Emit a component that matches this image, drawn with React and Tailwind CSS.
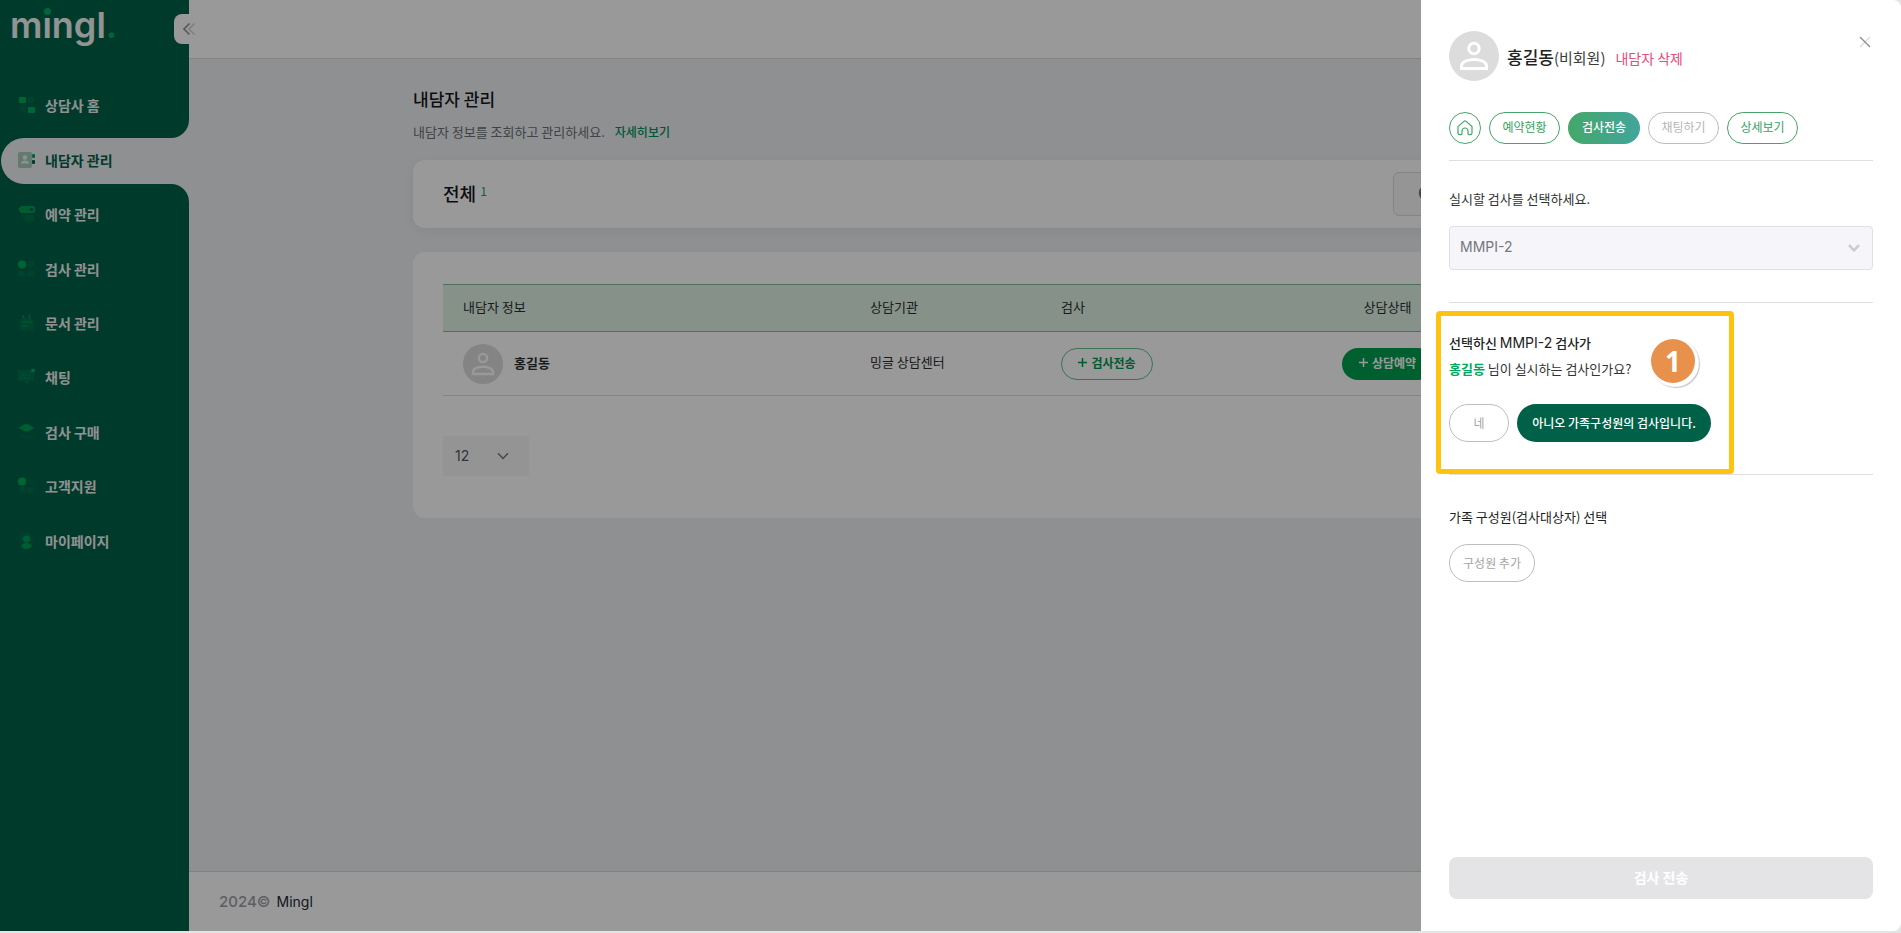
import React from "react";

const PersonIcon = ({ className }) => (
  <svg viewBox="0 0 50 50" className={className} aria-hidden="true">
    <circle cx="25" cy="25" r="25" fill="#dcdcdc" />
    <circle cx="25" cy="17.5" r="5.2" fill="none" stroke="#fff" strokeWidth="3" />
    <path
      d="M12.5 37.5v-2.6c0-4.6 8-6.4 12.5-6.4s12.5 1.8 12.5 6.4v2.6z"
      fill="none"
      stroke="#fff"
      strokeWidth="3"
    />
  </svg>
);

const ChevronDown = ({ className }) => (
  <svg viewBox="0 0 12 8" className={className} fill="none" stroke="currentColor" aria-hidden="true">
    <path d="M1 1.2 6 6.4l5-5.2" />
  </svg>
);

const icons = {
  home: (
    <>
      <rect x="1" y="1" width="7" height="6" rx="1" fill="#00a855" />
      <rect x="10" y="1" width="6" height="6" rx="1" fill="#006f4c" />
      <rect x="2" y="10" width="6" height="6" rx="1" fill="#006c4b" />
      <rect x="10" y="11" width="7" height="6" rx="1" fill="#00a855" />
    </>
  ),
  contacts: (
    <>
      <rect x="0" y="1" width="14" height="16" rx="2" fill="#a5cdb9" />
      <circle cx="7" cy="6.5" r="2.2" fill="#eff1f4" />
      <path d="M3 12.5c0-4 8-4 8 0z" fill="#eff1f4" />
      <rect x="14" y="3" width="3" height="4" rx="1" fill="#00a855" />
      <rect x="14" y="9" width="3" height="4" rx="1" fill="#006149" />
    </>
  ),
  booking: (
    <>
      <path d="M3.5 1H14a3.500 3.500 0 0 1 0 7H3.500L0 4.500z" fill="#009c53" />
      <circle cx="13.500" cy="4.500" r="1.800" fill="#006149" />
      <path d="M3 10h10a3.500 3.500 0 0 1 0 7H8z" fill="#00704c" />
    </>
  ),
  tests: (
    <>
      <circle cx="4" cy="4.500" r="4" fill="#00a855" />
      <rect x="10" y="1" width="6" height="6" rx="1.500" fill="#006f4c" />
      <rect x="0" y="11" width="7" height="5" rx="2" fill="#006f4c" />
      <rect x="9" y="11" width="8" height="5" rx="2" fill="#006f4c" />
    </>
  ),
  docs: (
    <>
      <path d="M4 4h10l2 5v5.500a2 2 0 0 1-2 2H3a2 2 0 0 1-2-2V9z" fill="#00704b" />
      <path d="M5.500 1v3M11.500 1v3M4 8h10M4 12h6" stroke="#009a54" strokeWidth="1.200" />
    </>
  ),
  chat: (
    <>
      <path d="M0 2h16v11h-4l-3 4-3-4H0z" fill="#00704f" />
      <circle cx="15" cy="2.500" r="2" fill="#00a855" />
      <path d="M4 7h9M3 10h8" stroke="#008a56" strokeDasharray="2 1" />
    </>
  ),
  shop: (
    <>
      <path d="M0 5c4-1 5-4 8.500-4S13 4 17 5c-4 1-5 3.500-8.500 3.500S4 6 0 5z" fill="#009c53" />
      <path d="M1 10c5 3 10 3 15 0v3c-4 4-11 4-15 0z" fill="#00694a" />
    </>
  ),
  support: (
    <>
      <circle cx="4" cy="4.500" r="4" fill="#00a855" />
      <rect x="10" y="2" width="6" height="5" rx="2" fill="#00694a" />
      <rect x="2" y="10" width="5" height="6" rx="2" fill="#006f4c" />
      <rect x="9" y="10" width="6" height="6" rx="2" fill="#006f4c" />
    </>
  ),
  me: (
    <>
      <circle cx="8.500" cy="8" r="7.500" fill="#00694a" />
      <circle cx="8.500" cy="7" r="3.500" fill="#009c53" />
      <path d="M3 14c2-4 9-4 11 0-2 4-9 4-11 0z" fill="#009c53" />
    </>
  ),
};

const menu = [
  { label: "상담사 홈", icon: "home" },
  { label: "내담자 관리", icon: "contacts", active: true },
  { label: "예약 관리", icon: "booking" },
  { label: "검사 관리", icon: "tests" },
  { label: "문서 관리", icon: "docs" },
  { label: "채팅", icon: "chat" },
  { label: "검사 구매", icon: "shop" },
  { label: "고객지원", icon: "support" },
  { label: "마이페이지", icon: "me" },
];

function InverseCorner({ top }) {
  return (
    <span
      className={
        top
          ? "absolute bottom-full right-0 size-[18px] bg-[#eff1f4]"
          : "absolute top-full right-0 size-[18px] bg-[#eff1f4]"
      }
    >
      <span
        className={
          top
            ? "block size-full rounded-br-[18px] bg-[#006149]"
            : "block size-full rounded-tr-[18px] bg-[#006149]"
        }
      />
    </span>
  );
}

function Sidebar() {
  return (
    <aside className="relative w-[189px] shrink-0 bg-[#006149]">
      <a
        href="#home"
        className="flex h-[79px] items-start pl-2.5 font-['Inter',sans-serif] text-4xl leading-[50px] font-semibold text-[#f4f6f5]"
      >
        <span>m</span>
        <span className="relative">
          i
          <span className="absolute top-2 left-0.5 size-[7px] rounded-full bg-[#00a862] ring-1 ring-[#006149]" />
        </span>
        <span>ngl</span>
        <span className="text-[#00a862]">.</span>
      </a>
      <button
        aria-label="메뉴 접기"
        className="absolute top-3.5 -right-4 flex h-[30px] w-[31px] items-center rounded-lg bg-white pl-2"
      >
        <svg viewBox="0 0 14 14" className="size-3.5" fill="none" strokeWidth="1.6" aria-hidden="true">
          <path d="M7.500 1.500 2 7l5.500 5.500" stroke="#909090" />
          <path d="M12.500 1.500 7 7l5.500 5.500" stroke="#d4d4d4" />
        </svg>
      </button>
      <nav>
        <ul className="grid h-[490px] auto-rows-fr">
          {menu.map((m) => (
            <li key={m.label} className="flex items-center">
              <a
                href={"#" + m.icon}
                className={
                  m.active
                    ? "relative ml-px flex h-[46px] flex-1 items-center gap-2.5 rounded-l-full bg-[#eff1f4] pb-0.5 pl-[17px] text-sm font-bold text-[#006149]"
                    : "ml-px flex h-[46px] flex-1 items-center gap-2.5 pb-0.5 pl-[17px] text-sm font-bold text-[#f0f2f1]"
                }
              >
                {m.active && <InverseCorner top />}
                {m.active && <InverseCorner />}
                <svg viewBox="0 0 17 18" className="h-[18px] w-[17px]" aria-hidden="true">
                  {icons[m.icon]}
                </svg>
                {m.label}
              </a>
            </li>
          ))}
        </ul>
      </nav>
    </aside>
  );
}

const PlusIcon = () => (
  <svg viewBox="0 0 9 9" className="size-[9px]" stroke="currentColor" strokeWidth="1.500" aria-hidden="true">
    <path d="M4.500 0v9M0 4.500h9" />
  </svg>
);

function ClientTable() {
  return (
    <table className="w-full table-fixed border-collapse text-left text-[13px] text-[#2b2f33]">
      <colgroup>
        <col className="w-[407px]" />
        <col className="w-[191px]" />
        <col className="w-[230px]" />
        <col className="w-[233px]" />
        <col />
      </colgroup>
      <thead>
        <tr className="h-[47px] border-y border-[#7fbf9f] bg-[#dff3e4]">
          <th className="pb-0.5 pl-5 font-normal">내담자 정보</th>
          <th className="pb-0.5 pl-5 font-normal">상담기관</th>
          <th className="pb-0.5 pl-5 font-normal">검사</th>
          <th className="pb-0.5 text-center font-normal">상담상태</th>
          <td />
        </tr>
      </thead>
      <tbody>
        <tr className="h-16 border-b border-[#dcdfe0]">
          <td className="pl-5">
            <div className="flex items-center gap-[11px]">
              <PersonIcon className="size-10" />
              <strong className="pb-0.5 font-bold">홍길동</strong>
            </div>
          </td>
          <td className="pb-1 pl-5">밍글 상담센터</td>
          <td className="pl-5">
            <button className="flex h-8 w-[92px] items-center justify-center gap-1 rounded-full border border-[#5fbf92] pb-0.5 text-xs font-bold text-[#009750]">
              <PlusIcon />
              검사전송
            </button>
          </td>
          <td>
            <button className="mx-auto flex h-8 w-[92px] items-center justify-center gap-1 rounded-full bg-[#009f4f] pb-0.5 text-xs font-bold text-white">
              <PlusIcon />
              상담예약
            </button>
          </td>
          <td />
        </tr>
      </tbody>
    </table>
  );
}

function Page() {
  return (
    <div className="flex min-w-0 flex-1 flex-col bg-[#eff1f4]">
      <header className="h-[59px] shrink-0 border-b border-[#d9dbdd] bg-white" />
      <main className="mx-auto w-full max-w-[1264px] flex-1 pt-7">
        <h1 className="text-[17px] leading-6 font-medium text-[#15171c]">내담자 관리</h1>
        <p className="mt-[11px] flex items-center gap-2.5 text-[13px] leading-5 text-[#6b6f75]">
          내담자 정보를 조회하고 관리하세요.
          <a href="#more" className="text-xs leading-5 font-medium text-[#008f5a]">
            자세히보기
          </a>
        </p>
        <section className="mt-[18px] flex h-[68px] items-center justify-between rounded-xl bg-white px-[30px] shadow-[0_4px_16px_rgba(0,0,0,0.06)]">
          <h2 className="flex pb-0.5 text-lg font-medium text-[#15171c]">
            전체
            <sup className="top-1 ml-1 text-xs leading-4 font-normal text-[#00a862]">1</sup>
          </h2>
          <label className="flex h-11 w-[254px] items-center gap-2 rounded-md border border-[#dcdde0] bg-[#f8f8f9] pl-6 text-[13px]">
            <svg viewBox="0 0 18 18" className="size-[18px] shrink-0" fill="none" stroke="#777" strokeWidth="2.500" aria-hidden="true">
              <circle cx="8" cy="8" r="6" />
              <path d="m13 13 4 4" />
            </svg>
            <input aria-label="검색" className="min-w-0 flex-1 bg-transparent outline-none" />
          </label>
        </section>
        <section className="mt-6 rounded-xl bg-white px-[30px] pt-8 pb-[42px]">
          <ClientTable />
          <div className="relative mt-10 w-[86px]">
            <select
              aria-label="페이지당 개수"
              className="h-10 w-full appearance-none bg-[#f7f7f8] pl-3 font-['Inter',sans-serif] text-sm text-[#55585e]"
            >
              <option>12</option>
            </select>
            <ChevronDown className="pointer-events-none absolute top-4 right-5 h-2 w-3 stroke-[1.5] text-[#777]" />
          </div>
        </section>
      </main>
      <footer className="flex h-[60px] shrink-0 items-center gap-1.5 border-t border-[#d3d6d9] bg-white pl-[30px] font-['Inter',sans-serif] text-sm">
        <span className="text-[15px] font-medium text-[#9c9da2]">2024©</span>
        <a href="#mingl" className="text-[#222638]">Mingl</a>
      </footer>
    </div>
  );
}

const tab = {
  on: "h-8 w-[72px] rounded-full bg-linear-to-r from-[#45a768] to-[#42a59c] pb-0.5 text-xs font-medium text-white",
  off: "h-8 w-[71px] rounded-full border border-[#45a56a] pb-0.5 text-xs text-[#37a162]",
  disabled: "h-8 w-[71px] rounded-full border border-[#bdbdbd] pb-0.5 text-xs text-[#b5b5b5]",
};

function Drawer() {
  return (
    <section
      role="dialog"
      aria-label="검사전송"
      className="absolute inset-y-0 right-0 flex w-[480px] flex-col rounded-r-lg bg-white px-7 pb-8 text-[13px] text-[#333]"
    >
      <div className="flex items-start justify-between pt-[31px]">
        <div className="flex items-center gap-2">
          <PersonIcon className="size-[50px]" />
          <div className="flex items-baseline gap-2.5 pt-0.5">
            <h2 className="text-[15px] text-[#3c3c3c]">
              <strong className="text-[17px] font-medium text-[#222]">홍길동</strong>(비회원)
            </h2>
            <button className="text-sm text-[#e8497e]">내담자 삭제</button>
          </div>
        </div>
        <button aria-label="닫기" className="mt-[5px] mr-0.5">
          <svg viewBox="0 0 12 12" className="size-3" aria-hidden="true">
            <path d="M11 1 1 11" stroke="#dadde2" strokeWidth="1.500" />
            <path d="m1 1 10 10" stroke="#888b90" strokeWidth="1.200" />
          </svg>
        </button>
      </div>
      <nav className="mt-[31px] flex gap-2 border-b border-[#dfdfdf] pb-4">
        <button
          aria-label="홈"
          className="flex size-8 items-center justify-center rounded-full border border-[#45a56a]"
        >
          <svg viewBox="0 0 16 16" className="size-4" fill="none" stroke="#45a56a" strokeWidth="1.200" aria-hidden="true">
            <path d="M1 6.600 6.900 1.400a1.700 1.700 0 0 1 2.200 0L15 6.600V13a1.700 1.700 0 0 1-1.700 1.700h-1.100a1.200 1.200 0 0 1-1.200-1.200V11a3 3 0 0 0-6 0v2.500a1.200 1.200 0 0 1-1.200 1.200H2.700A1.700 1.700 0 0 1 1 13z" />
          </svg>
        </button>
        <button className={tab.off}>예약현황</button>
        <button className={tab.on}>검사전송</button>
        <button className={tab.disabled}>채팅하기</button>
        <button className={tab.off}>상세보기</button>
      </nav>
      <div className="border-b border-[#dfdfdf] pt-7 pb-8">
        <label htmlFor="test" className="block leading-5">
          실시할 검사를 선택하세요.
        </label>
        <div className="relative mt-[17px]">
          <select
            id="test"
            className="h-11 w-full appearance-none rounded-sm border border-[#e0e0e4] bg-[#f5f5fa] pb-0.5 pl-2.5 font-['Inter',sans-serif] text-sm text-[#75777d]"
          >
            <option>MMPI-2</option>
          </select>
          <ChevronDown className="pointer-events-none absolute top-[18px] right-3 h-2 w-3.5 stroke-[2.5] text-[#cbccce]" />
        </div>
      </div>
      <div className="relative border-b border-[#dfdfdf] pt-[27px] pb-8">
        <p className="leading-[26px] font-medium text-[#222]">
          선택하신 <span className="font-['Inter',sans-serif] text-sm leading-5 font-normal">MMPI-2</span> 검사가
        </p>
        <p className="leading-[26px]">
          <strong className="font-bold text-[#00a862]">홍길동</strong> 님이 실시하는 검사인가요?
        </p>
        <div className="mt-[22px] flex gap-2">
          <button className="h-[38px] w-[60px] rounded-full border border-[#bdbdbd] text-xs text-[#a5a5a5]">네</button>
          <button className="h-[38px] w-[194px] rounded-full bg-[#006149] text-xs font-medium text-white">
            아니오 가족구성원의 검사입니다.
          </button>
        </div>
        <div className="pointer-events-none absolute top-2 bottom-0 -left-[13px] w-[298px] rounded-sm border-5 border-[#ffc20e]" />
        <span className="absolute top-9 left-[202px] flex size-11 items-center justify-center rounded-full bg-[#e8914d] font-['Noto_Sans',sans-serif] text-[28px] font-bold text-white shadow-[2px_2px_0_2px_#fff,3px_3px_1px_2px_#c4c4c4]">
          1
        </span>
      </div>
      <h3 className="mt-8 leading-5 font-normal text-[#222]">가족 구성원(검사대상자) 선택</h3>
      <button className="mt-[17px] h-[38px] w-[86px] rounded-full border border-[#bdbdbd] text-xs text-[#a5a5a5]">
        구성원 추가
      </button>
      <button disabled className="mt-auto h-[42px] rounded-lg bg-[#e4e4e6] pb-0.5 text-sm font-bold text-white">
        검사 전송
      </button>
    </section>
  );
}

export default function App() {
  return (
    <div className="flex min-h-screen flex-col bg-[#e3e5e4] pb-0.5 font-['Noto_Sans_CJK_KR',sans-serif]">
      <div className="relative flex flex-1 overflow-hidden">
        <Sidebar />
        <Page />
        <div className="absolute inset-y-0 right-2 left-0 bg-black/40" />
        <div className="absolute inset-y-0 right-0 w-2 bg-[#e3e5e4]" />
        <Drawer />
      </div>
    </div>
  );
}
